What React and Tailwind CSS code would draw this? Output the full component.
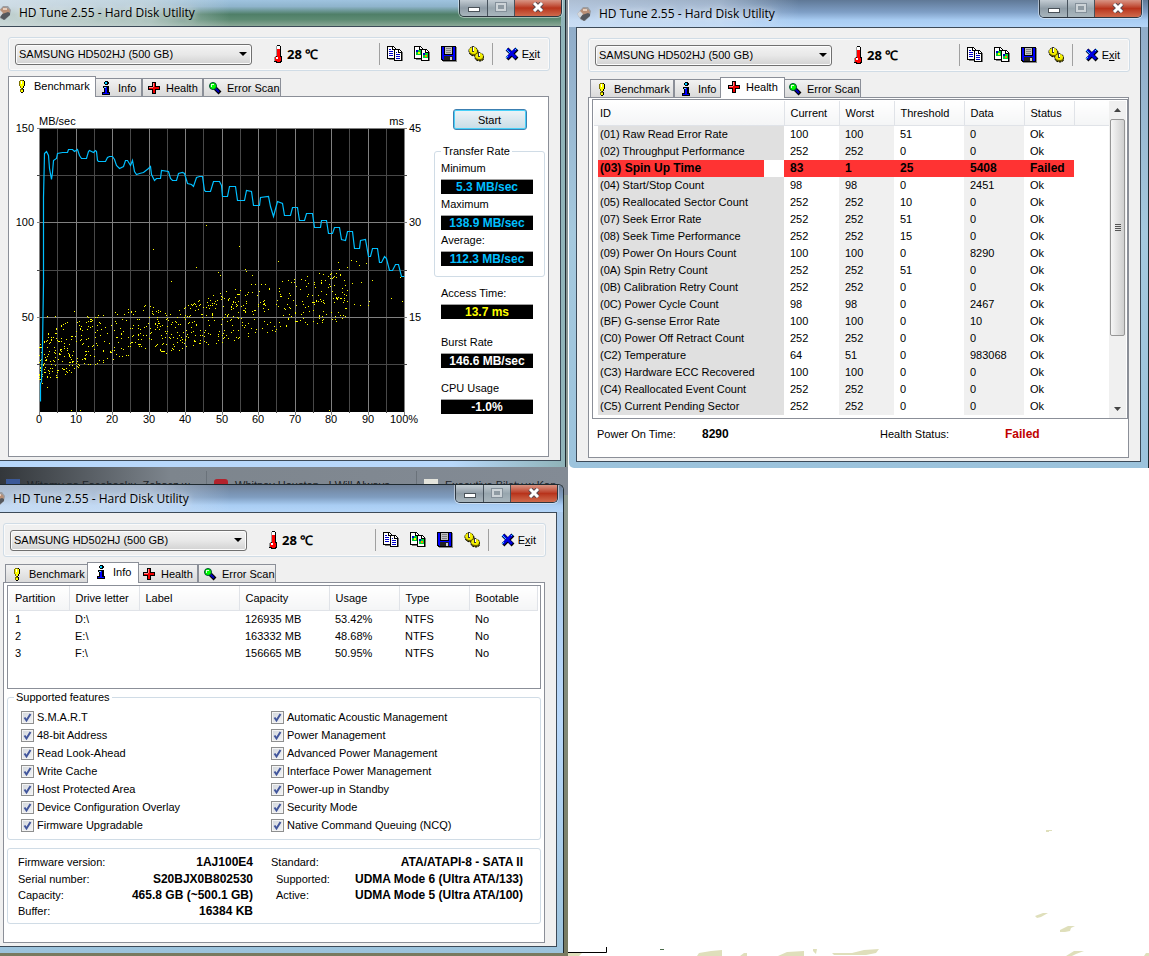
import clsx from "clsx";

const TRANSFER = [
  [1, 273], [1, 255], [2, 253], [3, 217], [4, 155], [4, 69], [5, 25], [7, 23], [9, 27], [10, 40],
  [12, 51], [13, 44], [14, 32], [17, 30], [18, 25], [23, 24], [28, 24], [29, 21], [33, 21], [35, 23],
  [38, 21], [40, 27], [42, 30], [47, 30], [49, 23], [50, 22], [54, 24], [56, 22], [57, 23], [58, 32],
  [59, 33], [66, 33], [68, 29], [70, 28], [73, 28], [75, 31], [77, 37], [80, 40], [84, 38], [86, 32],
  [88, 32], [91, 37], [93, 32], [95, 43], [97, 46], [100, 45], [104, 44], [109, 40], [111, 38], [112, 46],
  [115, 52], [117, 50], [121, 50], [122, 42], [129, 43], [131, 50], [133, 52], [137, 52], [139, 45], [143, 44],
  [145, 45], [148, 55], [152, 56], [154, 58], [157, 49], [160, 48], [163, 48], [165, 62], [166, 63], [171, 63],
  [174, 53], [180, 53], [182, 57], [183, 68], [188, 68], [190, 58], [196, 58], [198, 72], [205, 72], [207, 62],
  [212, 63], [214, 77], [220, 77], [221, 69], [229, 68], [231, 78], [234, 88], [238, 73], [243, 75], [245, 87],
  [251, 87], [253, 79], [258, 79], [260, 92], [265, 92], [267, 85], [273, 85], [275, 99], [281, 99], [282, 92],
  [287, 92], [289, 105], [293, 105], [295, 99], [300, 99], [302, 111], [306, 112], [308, 103], [313, 103], [315, 120],
  [320, 120], [321, 112], [326, 111], [329, 128], [331, 128], [333, 120], [338, 120], [340, 134], [342, 134], [345, 128],
  [347, 130], [350, 142], [353, 142], [356, 136], [359, 136], [362, 148], [365, 148],
];

// single slow / fast seeks outside the main band
const OUTLIERS = [
  [167, 97], [114, 121], [200, 118], [157, 139], [239, 133], [132, 153], [206, 141], [207, 143],
  [179, 144], [181, 147], [213, 147], [299, 134], [300, 141], [308, 139], [312, 132], [317, 133],
  [320, 137], [327, 135], [345, 129], [361, 149], [352, 170], [363, 173], [333, 152], [322, 154],
  [313, 155], [329, 177], [330, 173], [315, 176], [321, 177], [8, 188], [16, 188], [35, 183],
  [8, 259], [3, 255], [32, 282], [41, 282], [290, 282], [295, 157], [301, 170], [306, 188],
];

const BAND_TOP = [[0, 212], [11, 203], [34, 190], [71, 184], [104, 176], [143, 177], [174, 165], [206, 157], [236, 153], [271, 146], [310, 142]];
const BAND_BOTTOM = [[0, 254], [11, 251], [28, 247], [49, 238], [91, 228], [121, 226], [164, 217], [199, 212], [244, 203], [279, 197], [310, 190]];

function edgeAt(edge, x) {
  const i = Math.max(1, edge.findIndex(([ex]) => ex >= x));
  const [x0, y0] = edge[i - 1];
  const [x1, y1] = edge[i];
  return y0 + ((y1 - y0) * (x - x0)) / (x1 - x0);
}

function accessDots() {
  let seed = 4711;
  const rand = () => {
    seed = (seed + 0x6d2b79f5) | 0;
    let t = Math.imul(seed ^ (seed >>> 15), 1 | seed);
    t = (t + Math.imul(t ^ (t >>> 7), 61 | t)) ^ t;
    return ((t ^ (t >>> 14)) >>> 0) / 4294967296;
  };
  const dots = [];
  for (let i = 0; i < 740; i++) {
    const x = Math.pow(rand(), 1.4) * 308;
    const top = edgeAt(BAND_TOP, x);
    const bottom = edgeAt(BAND_BOTTOM, x);
    dots.push([Math.round(x), Math.round(top + (bottom - top) * rand())]);
  }
  return dots.concat(OUTLIERS);
}

const DOTS = accessDots();

const SMART = [
  ["(01) Raw Read Error Rate", 100, 100, 51, 0],
  ["(02) Throughput Performance", 252, 252, 0, 0],
  ["(03) Spin Up Time", 83, 1, 25, 5408, true],
  ["(04) Start/Stop Count", 98, 98, 0, 2451],
  ["(05) Reallocated Sector Count", 252, 252, 10, 0],
  ["(07) Seek Error Rate", 252, 252, 51, 0],
  ["(08) Seek Time Performance", 252, 252, 15, 0],
  ["(09) Power On Hours Count", 100, 100, 0, 8290],
  ["(0A) Spin Retry Count", 252, 252, 51, 0],
  ["(0B) Calibration Retry Count", 252, 252, 0, 0],
  ["(0C) Power Cycle Count", 98, 98, 0, 2467],
  ["(BF) G-sense Error Rate", 100, 100, 0, 10],
  ["(C0) Power Off Retract Count", 252, 252, 0, 0],
  ["(C2) Temperature", 64, 51, 0, 983068],
  ["(C3) Hardware ECC Recovered", 100, 100, 0, 0],
  ["(C4) Reallocated Event Count", 252, 252, 0, 0],
  ["(C5) Current Pending Sector", 252, 252, 0, 0],
];

const PARTITIONS = [
  ["1", "D:\\", "", "126935 MB", "53.42%", "NTFS", "No"],
  ["2", "E:\\", "", "163332 MB", "48.68%", "NTFS", "No"],
  ["3", "F:\\", "", "156665 MB", "50.95%", "NTFS", "No"],
];

const FEATURES = [
  ["S.M.A.R.T", "Automatic Acoustic Management"],
  ["48-bit Address", "Power Management"],
  ["Read Look-Ahead", "Advanced Power Management"],
  ["Write Cache", "Interface Power Management"],
  ["Host Protected Area", "Power-up in Standby"],
  ["Device Configuration Overlay", "Security Mode"],
  ["Firmware Upgradable", "Native Command Queuing (NCQ)"],
];

/* ---------- icons ---------- */

function DiskIcon({ className }) {
  return (
    <svg viewBox="0 0 16 16" className={clsx("size-4 shrink-0", className)} aria-hidden="true">
      <path d="M1 8 7 1h5l3 4-1 5-5 5-4-1z" fill="#9a9da2" />
      <path d="M4 5l4-3 5 2 1 3-4 4-5-2z" fill="#b98f76" />
      <path d="M6 9l6-2 2 1v2l-6 5-4-3z" fill="#55585e" />
      <path d="M1 8l3-3 3 3-3 4z" fill="#d5d8dc" />
      <path d="M7 3h4v2H7z" fill="#e6cdbb" />
    </svg>
  );
}

function BulbIcon() {
  return (
    <svg viewBox="0 0 16 16" className="size-4 shrink-0" shapeRendering="crispEdges" aria-hidden="true">
      <path d="M6 2h4v1h1v5h-1v2H9v1H7v-1H6V8H5V3h1zM6 11h4v3H9v1H7v-1H6z" fill="#7a7000" />
      <path d="M10 2v1h1v5h-1v2H9v1H8v-1h1V8h1V3H9V2zM9 11h1v3H9v1H7v-1h2z" fill="#000" />
      <path d="M6 3h4v5H9v2H7V8H6zM7 12h2v2H7z" fill="#ff0" />
      <path d="M7 3h1v3H7z" fill="#fff" />
    </svg>
  );
}

function InfoIcon() {
  return (
    <svg viewBox="0 0 16 16" className="size-4 shrink-0" shapeRendering="crispEdges" aria-hidden="true">
      <path d="M7 1h3v1h1v2h-1v1H7V4H6V2h1z" fill="#000" />
      <path d="M7 2h2v2H7z" fill="#0cf" />
      <path d="M5 6h6v6h1v3H4v-3h2V8H5z" fill="#000" />
      <path d="M6 7h3v6h2v1H5v-1h2V8H6z" fill="#00f" />
      <path d="M6 7h2v1H6z" fill="#6cf" />
    </svg>
  );
}

function CrossIcon() {
  return (
    <svg viewBox="0 0 16 16" className="size-4 shrink-0" shapeRendering="crispEdges" aria-hidden="true">
      <path d="M6 2h4v4h4v4h-4v4H6v-4H2V6h4z" fill="#000" />
      <path d="M7 3h2v4h4v2H9v4H7V9H3V7h4z" fill="#f00000" />
      <path d="M7 3h1v4H7zM3 7h4v1H3z" fill="#ff8a8a" />
    </svg>
  );
}

function MagnifierIcon() {
  return (
    <svg viewBox="0 0 16 16" className="size-4 shrink-0" aria-hidden="true">
      <path d="M8 8l5 5" stroke="#000" strokeWidth="4" />
      <path d="M8 8l4 4" stroke="#0000c0" strokeWidth="2" />
      <circle cx="6" cy="6" r="3.500" fill="#0f0" stroke="#043" strokeWidth="1" />
      <path d="M4 4h3v1H5v2H4z" fill="#dfd" />
    </svg>
  );
}

function ThermometerIcon() {
  return (
    <svg viewBox="0 0 10 18" className="h-[18px] w-[10px] shrink-0" shapeRendering="crispEdges" aria-hidden="true">
      <path d="M4 0h3v1h1v10h1v6H8v1H3v-1H1v-5h2V1h1z" fill="#000" />
      <path d="M3 1h2v10H3v1H2v4H1v-4h1v-1h1z" fill="#999" />
      <path d="M4 1h3v3H4z" fill="#fff" />
      <path d="M4 4h3v8h1v4H7v1H4v-1H2v-4h2z" fill="#f00" />
      <path d="M3 12h2v2H3z" fill="#fff" />
    </svg>
  );
}

function CopyIcon({ picture }) {
  return (
    <svg viewBox="0 0 16 16" className="size-4" shapeRendering="crispEdges" aria-hidden="true">
      <path d="M2 13h6v1H2zM9 15h7V6h-1v9z" fill="#777" />
      <path d="M0 0h6l3 3v10H0z" fill="#000" />
      <path d="M1 1h4v3h3v8H1zM6 1l2 2H6z" fill="#fff" />
      <path d="M7 3h5l3 3v9H7z" fill="#000" />
      <path d="M8 4h3v3h3v7H8zM12 4l2 2h-2z" fill="#fff" />
      {picture ? (
        <>
          <path d="M2 4h5v5H2z" fill="#0c3" />
          <path d="M2 4h2v2H2z" fill="#00c" />
          <path d="M4 6h2v2H4z" fill="#ff0" />
          <path d="M9 7h5v5H9z" fill="#0d3" />
          <path d="M9 7h2v2H9z" fill="#00c" />
          <path d="M11 9h2v2h-2z" fill="#f80" />
        </>
      ) : (
        <path d="M2 3h2v1H2zM2 5h4v1H2zM2 7h4v1H2zM2 9h4v1H2zM9 6h1v1H9zM9 8h4v1H9zM9 10h4v1H9zM9 12h4v1H9z" fill="#00c" />
      )}
    </svg>
  );
}

function SaveIcon() {
  return (
    <svg viewBox="0 0 16 16" className="size-4" shapeRendering="crispEdges" aria-hidden="true">
      <path d="M1 1h15v15H2v-1H1z" fill="#888" />
      <path d="M0 0h15v15H1v-1H0z" fill="#000" />
      <path d="M1 1h2v8h9V1h2v13H2v-1H1z" fill="#00f" />
      <path d="M4 1h7v7H4z" fill="#c0c0c0" />
      <path d="M5 2h5v1H5zM5 4h5v1H5zM5 6h5v1H5z" fill="#808080" />
      <path d="M3 10h9v4H3z" fill="#222" />
      <path d="M9 11h2v3H9z" fill="#ccc" />
    </svg>
  );
}

function OptionsIcon() {
  return (
    <svg viewBox="0 0 16 16" className="size-4" aria-hidden="true">
      <path d="M1 5c0-3 2-4 4-4 3 0 5 2 5 5 0 2-1 4-3 4-4 0-6-2-6-5z" fill="#6b6200" stroke="#000" strokeDasharray="2 1" />
      <path d="M1 4c1-2 2-3 4-3 3 0 4 2 4 4s-1 3-3 3C3 8 1 6 1 4z" fill="#f2ee00" />
      <path d="M7 11c0-2 2-4 4-4 3 0 5 2 5 4 0 3-2 4-4 4-3 0-5-1-5-4z" fill="#6b6200" stroke="#000" strokeDasharray="2 1" />
      <path d="M7 10c1-2 2-3 4-3 3 0 4 2 4 3 0 2-1 3-3 3-3 0-5-1-5-3z" fill="#f2ee00" />
      <path d="M4 0h2v6H4zM10 6h2v5h-2z" fill="#333" />
      <path d="M5 1h1v4H5zM11 7h1v3h-1z" fill="#fff" />
    </svg>
  );
}

function ExitIcon() {
  return (
    <svg viewBox="0 0 14 14" className="size-[14px]" aria-hidden="true">
      <path d="M2 2l10 10M12 2l-10 10" stroke="#000" strokeWidth="4" />
      <path d="M2 2l9 9M11 2l-9 9" stroke="#0000e0" strokeWidth="3" />
      <path d="M1 2l4 4M10 3l2-2M1 11l2-2" stroke="#4cf" strokeWidth="1" />
    </svg>
  );
}

/* ---------- window chrome ---------- */

function CaptionButtons({ className }) {
  return (
    <div
      className={clsx(
        "-mr-px ml-auto flex w-[103px] shrink-0 self-start overflow-hidden rounded-b-[5px] border border-t-0 border-[#2c3640] shadow-[0_0_0_1px_rgba(255,255,255,0.45)]",
        className
      )}
    >
      <button aria-label="Minimize" className="flex w-[28px] items-end justify-center border-r border-[#47525c] bg-linear-to-b from-[#c3ccd3] via-[#8f9ca6] to-[#a9b6bd] pb-1">
        <span className="h-[5px] w-3 border border-[#4a5259] bg-white" />
      </button>
      <button aria-label="Maximize" className="flex w-[27px] items-end justify-center border-r border-[#47525c] bg-linear-to-b from-[#c3ccd3] via-[#98a6ae] to-[#a9b6bd] pb-[5px]">
        <span className="h-2 w-[10px] border-2 border-[#cdd4d8] bg-[#8f9ba3] outline outline-[#84909a]" />
      </button>
      <button aria-label="Close" className="flex flex-1 items-end justify-center bg-linear-to-b from-[#d89484] via-[#b8331b] to-[#cf6a4c] pb-1">
        <svg viewBox="0 0 12 10" className="h-[10px] w-3" aria-hidden="true">
          <path d="M2 1l8 8M10 1l-8 8" stroke="#5b4a50" strokeWidth="5" />
          <path d="M2 1l8 8M10 1l-8 8" stroke="#fff" strokeWidth="3" />
        </svg>
      </button>
    </div>
  );
}

function ToolButton({ label, children }) {
  return (
    <button aria-label={label} className="flex size-4 items-center justify-center">
      {children}
    </button>
  );
}

function Toolbar() {
  return (
    <div className="flex h-[34px] items-center rounded-[3px] border border-[#d0dce6] pl-[6px] pr-[9px] shadow-[inset_0_0_0_1px_#fafafa]">
      <div className="grid w-[237px]">
        <select
          aria-label="Drive"
          className="col-start-1 row-start-1 h-[21px] w-full appearance-none rounded-[3px] border border-[#707070] bg-linear-to-b from-[#f2f2f2] via-[#e8e8e8] to-[#d2d2d2] pl-[3px] shadow-[inset_0_0_0_1px_#fcfcfc]"
        >
          <option>SAMSUNG HD502HJ (500 GB)</option>
        </select>
        <svg viewBox="0 0 8 4" className="pointer-events-none col-start-1 row-start-1 mr-[5px] h-1 w-2 self-center justify-self-end" aria-hidden="true">
          <path d="M0 0h8L4 4z" fill="#000" />
        </svg>
      </div>
      <div className="ml-[21px] flex items-center gap-1">
        <ThermometerIcon />
        <span className="font-['Open_Sans',sans-serif] text-[13px] font-bold">28 ℃</span>
      </div>
      <div className="ml-auto flex items-center">
        <div className="h-[22px] w-px bg-[#a0a0a0]" />
        <div className="flex gap-[11px] pl-[7px] pr-2">
          <ToolButton label="Copy text"><CopyIcon /></ToolButton>
          <ToolButton label="Copy picture"><CopyIcon picture /></ToolButton>
          <ToolButton label="Save"><SaveIcon /></ToolButton>
          <ToolButton label="Options"><OptionsIcon /></ToolButton>
        </div>
        <div className="h-[22px] w-px bg-[#a0a0a0]" />
        <button className="flex items-center gap-[3px] pl-3">
          <ExitIcon />
          <span>E<u>x</u>it</span>
        </button>
      </div>
    </div>
  );
}

const TABS = [
  { name: "Benchmark", icon: <BulbIcon />, width: "w-[84px]", activeWidth: "w-[88px]" },
  { name: "Info", icon: <InfoIcon />, width: "w-[48px]", activeWidth: "w-[52px]" },
  { name: "Health", icon: <CrossIcon />, width: "w-[61px]", activeWidth: "w-[65px]" },
  { name: "Error Scan", icon: <MagnifierIcon />, width: "w-[78px]", activeWidth: "w-[82px]" },
];

function Tabs({ active }) {
  return (
    <div role="tablist" className="mt-[5px] flex h-5 items-end pl-[2px]">
      {TABS.map((tab) => {
        const on = tab.name === active;
        return (
          <button
            key={tab.name}
            role="tab"
            aria-selected={on}
            className={clsx(
              "flex shrink-0 items-center gap-1 whitespace-nowrap border border-b-0 border-[#8b8f98]",
              on
                ? ["z-10 -mx-[2px] -mb-px h-[21px] bg-white pb-[2px] pl-[5px]", tab.activeWidth]
                : ["h-[18px] bg-linear-to-b from-[#f2f2f2] to-[#dadada] pl-[3px]", tab.width]
            )}
          >
            {tab.icon}
            {tab.name}
          </button>
        );
      })}
    </div>
  );
}

function Window({ active, frame, title, icon, controls, body, children }) {
  return (
    <section className={clsx("overflow-hidden pb-[6px]", frame)}>
      <header className={clsx("flex items-center gap-[7px]", title)}>
        <DiskIcon className={icon} />
        <h1 className="whitespace-nowrap font-['Open_Sans',sans-serif] text-[12px] [text-shadow:0_0_6px_#ffffffaa,0_0_10px_#ffffffaa]">
          HD Tune 2.55 - Hard Disk Utility
        </h1>
        <CaptionButtons className={controls} />
      </header>
      <div className={clsx("border-y border-r border-[#3c4a58] bg-[#f0f0f0] pt-[10px] pr-[10px] pb-[3px]", body)}>
        <Toolbar />
        <Tabs active={active} />
        <div role="tabpanel" className="mr-px h-[361px] border border-[#8b8f98] bg-white">
          {children}
        </div>
      </div>
    </section>
  );
}

/* ---------- benchmark ---------- */

function Chart() {
  return (
    <svg viewBox="0 0 425 340" className="h-[340px] w-[425px] shrink-0 text-[11px]" role="img" aria-label="Transfer rate and access time">
      <text x="30" y="28">MB/sec</text>
      <text x="395" y="28" textAnchor="end">ms</text>
      <g transform="translate(30 31)">
        <g shapeRendering="crispEdges">
          <rect width="366" height="284" fill="#000" />
          {[...Array(21).keys()].map((i) => (
            <rect key={i} x={Math.round(i * 18.25)} y="0" width="1" height={i % 2 ? 285 : 287} fill={i % 2 ? "#484848" : "#808080"} />
          ))}
          {[0, 47, 94, 142, 189, 236].map((y, i) => (
            <rect key={y} x="-2" y={y} width="370" height="1" fill={i % 2 ? "#484848" : "#808080"} />
          ))}
          {DOTS.map(([x, y], i) => (
            <rect key={i} x={x} y={y} width="1" height="1" fill="#ff0" />
          ))}
        </g>
        <polyline
          points={TRANSFER.map(([x, y]) => `${x + 0.5},${y + 0.5}`).join(" ")}
          fill="none"
          stroke="#00bfff"
          strokeWidth="1.2"
        />
      </g>
      {[[150, 45, 35], [100, 30, 129], [50, 15, 224]].map(([mb, ms, y]) => (
        <g key={mb}>
          <text x="25" y={y} textAnchor="end">{mb}</text>
          <text x="400" y={y}>{ms}</text>
        </g>
      ))}
      {[0, 10, 20, 30, 40, 50, 60, 70, 80, 90].map((n, i) => (
        <text key={n} x={Math.round(30 + i * 36.5)} y="326" textAnchor="middle">{n}</text>
      ))}
      <text x="381" y="326">100%</text>
    </svg>
  );
}

function Readout({ label, value, color = "text-[#00bfff]", className }) {
  return (
    <div className={clsx("w-[92px]", className)}>
      <div className="leading-[21px]">{label}</div>
      <div className={clsx("h-[15px] border-t border-[#a0a0a0] bg-black text-center text-[12px] font-bold leading-[14px]", color)}>
        {value}
      </div>
    </div>
  );
}

function Benchmark() {
  return (
    <div className="flex">
      <Chart />
      <div className="mr-[3px] flex flex-1 flex-col">
        <button className="mt-3 h-[21px] w-[74px] self-center rounded-[3px] border border-[#3c7fb1] bg-linear-to-b from-[#eef4f7] to-[#c8dce6] shadow-[inset_0_0_0_1px_#48d0f8]">
          Start
        </button>
        <fieldset className="mt-[14px] rounded-[3px] border border-[#d0dce6] pl-[6px] pb-[10px]">
          <legend className="px-[2px] leading-[14px]">Transfer Rate</legend>
          <Readout label="Minimum" value="5.3 MB/sec" />
          <Readout label="Maximum" value="138.9 MB/sec" />
          <Readout label="Average:" value="112.3 MB/sec" />
        </fieldset>
        <div className="pl-[7px]">
          <Readout className="mt-[6px]" label="Access Time:" value="13.7 ms" color="text-[#ffff00]" />
          <Readout className="mt-[13px]" label="Burst Rate" value="146.6 MB/sec" color="text-white" />
          <Readout className="mt-[10px]" label="CPU Usage" value="-1.0%" color="text-white" />
        </div>
      </div>
    </div>
  );
}

/* ---------- health ---------- */

function HeadCell({ children, className }) {
  return (
    <th scope="col" className={clsx("h-6 border-r border-b border-[#e0e3e8] bg-linear-to-b from-white to-[#f4f5f6] p-0 pl-[6px] text-left font-normal", className)}>
      {children}
    </th>
  );
}

function ScrollBar() {
  return (
    <div className="mr-px flex w-[17px] flex-col items-center bg-[#f0f0f0]">
      <svg viewBox="0 0 7 4" className="my-[7px] h-1 w-[7px]" aria-hidden="true">
        <path d="M0 4h7L3.500 0z" fill="#444" />
      </svg>
      <div className="flex h-[217px] w-[15px] flex-col items-center justify-center gap-px rounded-[2px] border border-[#969696] bg-linear-to-r from-[#f6f6f6] to-[#cfcfcf]">
        <span className="h-px w-[6px] bg-[#555]" />
        <span className="h-px w-[6px] bg-[#555]" />
        <span className="h-px w-[6px] bg-[#555]" />
        <span className="h-px w-[6px] bg-[#555]" />
      </div>
      <svg viewBox="0 0 7 4" className="mt-auto mb-[7px] h-1 w-[7px]" aria-hidden="true">
        <path d="M0 0h7L3.500 4z" fill="#444" />
      </svg>
    </div>
  );
}

function Health() {
  return (
    <div className="pt-px pl-[3px]">
      <div className="flex h-[320px] border border-[#8b8f98] pt-px pl-px">
        <table className="flex-1 table-fixed border-collapse self-start">
          <colgroup>
            <col className="w-[190px]" />
            <col className="w-[55px]" />
            <col className="w-[55px]" />
            <col className="w-[70px]" />
            <col className="w-[60px]" />
            <col className="w-[50px]" />
            <col />
          </colgroup>
          <thead>
            <tr>
              <HeadCell>ID</HeadCell>
              <HeadCell>Current</HeadCell>
              <HeadCell>Worst</HeadCell>
              <HeadCell>Threshold</HeadCell>
              <HeadCell>Data</HeadCell>
              <HeadCell>Status</HeadCell>
              <HeadCell className="border-r-0" />
            </tr>
          </thead>
          <tbody>
            {SMART.map(([name, current, worst, threshold, data, failed]) => {
              const hot = failed && "bg-[#ff3333]";
              return (
                <tr key={name} className={clsx("h-[17px] leading-[17px]", failed && "text-[12px] font-bold")}>
                  <td className="p-0 pl-1">
                    <div className={clsx("h-[17px] pl-[2px]", failed ? "mr-5 bg-[#ff3333]" : "bg-[#e0e0e0]")}>
                      {name}
                    </div>
                  </td>
                  <td className={clsx("p-0 pl-[6px]", hot)}>{current}</td>
                  <td className={clsx("p-0 pl-[6px]", hot || "bg-[#f0f0f0]")}>{worst}</td>
                  <td className={clsx("p-0 pl-[6px]", hot)}>{threshold}</td>
                  <td className={clsx("p-0 pl-[6px]", hot || "bg-[#f0f0f0]")}>{data}</td>
                  <td className={clsx("p-0 pl-[6px]", hot)}>{failed ? "Failed" : "Ok"}</td>
                  <td />
                </tr>
              );
            })}
          </tbody>
        </table>
        <ScrollBar />
      </div>
      <div className="flex h-[30px] items-center pl-[5px]">
        <span className="w-[105px]">Power On Time:</span>
        <b className="w-[178px] text-[12px]">8290</b>
        <span className="w-[125px]">Health Status:</span>
        <b className="text-[12px] text-[#c00000]">Failed</b>
      </div>
    </div>
  );
}

/* ---------- info ---------- */

function Feature({ name }) {
  return (
    <label className="flex h-[18px] items-center gap-[3px]">
      <span className="grid">
        <input
          type="checkbox"
          defaultChecked
          className="peer col-start-1 row-start-1 size-[13px] appearance-none border border-[#8e8f8f] bg-linear-to-br from-[#d2d6dc] to-[#f4f5f6] shadow-[inset_0_0_0_1px_#f4f4f4]"
        />
        <svg viewBox="0 0 13 13" className="pointer-events-none invisible col-start-1 row-start-1 size-[13px] peer-checked:visible" aria-hidden="true">
          <path d="M3.500 6.500l2 3L9.500 3" fill="none" stroke="#42569c" strokeWidth="2" />
        </svg>
      </span>
      {name}
    </label>
  );
}

function Info() {
  return (
    <div className="pt-[2px] pl-[3px] pr-[3px]">
      <div className="h-[104px] border border-[#8b8f98] pl-px pr-[2px]">
        <table className="w-full table-fixed border-collapse">
          <colgroup>
            <col className="w-[60px]" />
            <col className="w-[70px]" />
            <col className="w-[100px]" />
            <col className="w-[90px]" />
            <col className="w-[70px]" />
            <col className="w-[70px]" />
            <col />
          </colgroup>
          <thead>
            <tr>
              {["Partition", "Drive letter", "Label", "Capacity", "Usage", "Type", "Bootable"].map((h) => (
                <HeadCell key={h}>{h}</HeadCell>
              ))}
            </tr>
          </thead>
          <tbody>
            {PARTITIONS.map((row) => (
              <tr key={row[0]} className="h-[17px] leading-[17px]">
                {row.map((cell, i) => (
                  <td key={i} className="p-0 pl-[6px]">{cell}</td>
                ))}
              </tr>
            ))}
          </tbody>
        </table>
      </div>

      <fieldset className="mt-px rounded-[3px] border border-[#d0dce6] pt-1 pb-[5px] pl-[13px]">
        <legend className="-ml-[7px] px-[2px] leading-[14px]">Supported features</legend>
        {FEATURES.map(([left, right]) => (
          <div key={left} className="grid grid-cols-[250px_1fr]">
            <Feature name={left} />
            <Feature name={right} />
          </div>
        ))}
      </fieldset>

      <div className="mt-2 grid h-[76px] grid-cols-[235px_1fr] gap-x-[18px] rounded-[3px] border border-[#d0dce6] pt-[5px] pr-[17px] pl-[10px] leading-4">
        <dl>
          <div className="mb-px flex justify-between">
            <dt>Firmware version:</dt>
            <dd className="text-[12px] font-bold">1AJ100E4</dd>
          </div>
          <div className="flex justify-between">
            <dt>Serial number:</dt>
            <dd className="text-[12px] font-bold">S20BJX0B802530</dd>
          </div>
          <div className="flex justify-between">
            <dt>Capacity:</dt>
            <dd className="text-[12px] font-bold">465.8 GB (~500.1 GB)</dd>
          </div>
          <div className="flex justify-between">
            <dt>Buffer:</dt>
            <dd className="text-[12px] font-bold">16384 KB</dd>
          </div>
        </dl>
        <dl>
          <div className="mb-px flex justify-between">
            <dt>Standard:</dt>
            <dd className="text-[12px] font-bold">ATA/ATAPI-8 - SATA II</dd>
          </div>
          <div className="flex justify-between pl-[5px]">
            <dt>Supported:</dt>
            <dd className="text-[12px] font-bold">UDMA Mode 6 (Ultra ATA/133)</dd>
          </div>
          <div className="flex justify-between pl-[5px]">
            <dt>Active:</dt>
            <dd className="text-[12px] font-bold">UDMA Mode 5 (Ultra ATA/100)</dd>
          </div>
        </dl>
      </div>
    </div>
  );
}

/* ---------- desktop ---------- */

// browser tabs; the window below is drawn over their lower half
function BrowserStrip() {
  return (
    <div className="-mb-[11px] flex h-7 items-start gap-[7px] whitespace-nowrap bg-linear-to-r from-[#33373b] via-[#7d858d] via-30% to-[#838b95] pt-3 pl-[6px] leading-3 text-[#20252a]">
      <span className="size-[14px] shrink-0 bg-[#3b5998]" />
      <span className="w-[172px] shrink-0">Witamy na Facebooku. Zobacz w...</span>
      <span className="-mt-2 h-6 w-px shrink-0 bg-[#6a727a]" />
      <span className="size-[14px] shrink-0 rounded-[3px] bg-[#b3222c]" />
      <span className="w-[174px] shrink-0">Whitney Houston - I Will Always...</span>
      <span className="-mt-2 h-6 w-px shrink-0 bg-[#6a727a]" />
      <span className="size-[14px] shrink-0 bg-[#e4e4dc]" />
      <span>Executive Bilety w Kan</span>
    </div>
  );
}

function Specks() {
  return (
    <svg viewBox="0 0 581 130" className="w-full" aria-hidden="true">
      <path d="M0 126.500h38.500V121" fill="none" stroke="#000" />
      <path d="M0 127h14l-3 3H0z" fill="#dfdfbb" />
      <path
        d="M478 4h6v1h-3v1h-3zM467 90l8-3h5l-7 4-4 1zM492 104l8-4h7l-4 2-1 3-5 1h-5zM129 130l2-3 12-2 11-1v6zM172 130l4-3h3v3zM210 130l9-4 17-1v5zM245 123h4l-1 5-3-3zM264 127h20l12-3 15-1-3 4-10 2h-32zM498 130l8-5h10l-8 3-4 2zM576 130l2-3h3v3z"
        fill="#dfdfbb"
      />
      <path d="M92 123h4v1h-4z" fill="#4b6b4b" />
    </svg>
  );
}

export default function App() {
  return (
    <main className="grid min-h-screen grid-cols-[568fr_581fr] bg-white font-['Liberation_Sans',Arial,sans-serif] text-[11px] leading-4 text-black">
      <div className="flex min-w-0 flex-col bg-linear-to-b from-[#7f8890] via-[#8d9a92] to-[#787a60]">
        <Window
          active="Benchmark"
          frame="mr-[2px] pr-[4px] bg-linear-to-r from-[#b8d8fb] via-[#b8d8fb] via-80% to-[#8fb3b8] border-r border-[#1e2a30]"
          title="h-[26px] bg-[linear-gradient(to_right,#dde5eacc,#d0dcdfaa_150px,transparent_230px),linear-gradient(to_bottom,#9fc3df,#8fb4cc_25%,#4f7f68_55%,#5c8a72_75%,#8aa897)]"
          icon="-ml-1"
          controls="h-[17px]"
          body="pl-2"
        >
          <Benchmark />
        </Window>
        <BrowserStrip />
        <Window
          active="Info"
          frame="relative mr-[4px] pr-[6px] rounded-tr-[6px] bg-linear-to-b from-[#a9c8e8] via-[#b8d8fb] to-[#9cc3dc] border-t border-r border-[#1e2a30]"
          title="h-[27px] bg-[linear-gradient(to_right,#d5e2f299,#d5e2f288_150px,transparent_230px),linear-gradient(to_bottom,#6f8097,#7f9dc0_45%,#a9cdf3_75%,#b4d5f8)] -mr-[6px] pr-[6px]"
          icon="-ml-[10px]"
          controls="h-[18px]"
          body="pl-[3px]"
        >
          <Info />
        </Window>
      </div>
      <div className="flex min-w-0 flex-col justify-between">
        <Window
          active="Health"
          frame="ml-px px-[7px] rounded-bl-[5px] bg-linear-to-b from-[#8ea9c6] via-[#a5c9de] to-[#9cc3dc] border-r border-[#1e2a30]"
          title="h-[27px] bg-[linear-gradient(to_right,#d5e2f2aa,#d5e2f288_150px,transparent_230px),linear-gradient(to_bottom,#5f7896,#7f9fc6_45%,#a9cdf3_75%,#b4d5f8)] -mx-[7px] px-[7px]"
          icon=""
          controls="h-[18px]"
          body="border-l pl-[11px]"
        >
          <Health />
        </Window>
        <Specks />
      </div>
    </main>
  );
}
